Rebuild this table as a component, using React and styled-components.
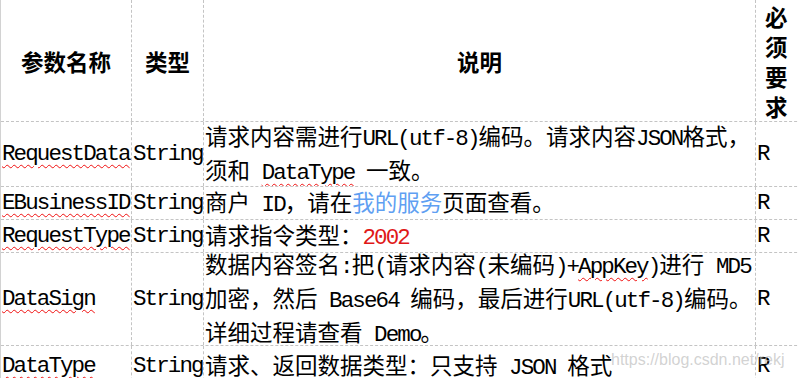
import React from 'react';
import styled, { createGlobalStyle, css } from 'styled-components';

const GlobalStyle = createGlobalStyle`
  html, body {
    margin: 0;
    padding: 0;
    background: #fff;
  }
  body {
    width: 798px;
    height: 378px;
    overflow: hidden;
    font-family: "Noto Sans CJK SC", sans-serif;
  }
`;

const COLS = '131px 72px 552px 80px';
const GRID = '#c4c4c4';

const Sheet = styled.div`
  position: relative;
  width: 836px;
  border-left: 1px solid #d2d2d2;
  color: #000;
  font-family: "Noto Sans CJK SC", sans-serif;
  font-size: 22.5px;
  line-height: 30px;
`;

const Row = styled.div`
  display: grid;
  grid-template-columns: ${COLS};
  box-sizing: border-box;
  height: ${(p) => p.$h}px;
  border-bottom: ${(p) => (p.$last ? 'none' : `1px dashed ${GRID}`)};
`;

const Cell = styled.div`
  display: flex;
  align-items: center;
  justify-content: ${(p) => (p.$center ? 'center' : 'flex-start')};
  padding: 0 ${(p) => p.$pad || 1}px;
  border-right: 1px dashed ${GRID};
  white-space: nowrap;
  overflow: hidden;
  font-weight: ${(p) => (p.$head ? 700 : 400)};
`;

const Stack = styled.span`
  display: block;
  width: 1em;
  white-space: normal;
  line-height: 30px;
`;

const Lines = styled.div`
  line-height: 30px;
`;

const Latin = styled.span`
  font-family: "Liberation Mono", monospace;
  font-size: 22.5px;
  letter-spacing: -1.9px;
  ${(p) =>
    p.$wavy &&
    css`
      text-decoration-line: underline;
      text-decoration-style: wavy;
      text-decoration-color: #f01010;
      text-decoration-thickness: 1px;
      text-underline-offset: 4px;
    `}
`;

const Link = styled.span`
  color: #5f9ff2;
`;

const Code = styled(Latin)`
  color: #e01818;
`;

const Watermark = styled.div`
  position: absolute;
  left: 610px;
  top: 348px;
  font-family: "Liberation Sans", sans-serif;
  font-size: 16px;
  line-height: 24px;
  color: rgba(185, 185, 185, 0.65);
  pointer-events: none;
`;

const Name = ({ children }) => (
  <Cell>
    <Latin $wavy>{children}</Latin>
  </Cell>
);

const Type = () => (
  <Cell>
    <Latin>String</Latin>
  </Cell>
);

const Req = () => (
  <Cell>
    <Latin>R</Latin>
  </Cell>
);

export default function App() {
  return (
    <>
      <GlobalStyle />
      <Sheet>
        <Row $h={122}>
          <Cell $head $center>参数名称</Cell>
          <Cell $head $center>类型</Cell>
          <Cell $head $center>说明</Cell>
          <Cell $head $pad={9}>
            <Stack>必须要求</Stack>
          </Cell>
        </Row>

        <Row $h={65}>
          <Name>RequestData</Name>
          <Type />
          <Cell>
            <Lines>
              请求内容需进行<Latin>URL(utf-8)</Latin>编码。请求内容<Latin>JSON</Latin>格式，
              <br />
              须和<Latin> </Latin>
              <Latin $wavy>DataType</Latin>
              <Latin> </Latin>一致。
            </Lines>
          </Cell>
          <Req />
        </Row>

        <Row $h={33}>
          <Name>EBusinessID</Name>
          <Type />
          <Cell>
            <Lines>
              商户<Latin> ID</Latin>，请在<Link>我的服务</Link>页面查看。
            </Lines>
          </Cell>
          <Req />
        </Row>

        <Row $h={33}>
          <Name>RequestType</Name>
          <Type />
          <Cell>
            <Lines>
              请求指令类型：<Code>2002</Code>
            </Lines>
          </Cell>
          <Req />
        </Row>

        <Row $h={93}>
          <Name>DataSign</Name>
          <Type />
          <Cell>
            <Lines>
              数据内容签名<Latin>:</Latin>把<Latin>(</Latin>请求内容<Latin>(</Latin>未编码
              <Latin>)+</Latin>
              <Latin $wavy>AppKey</Latin>
              <Latin>)</Latin>进行<Latin> MD5</Latin>
              <br />
              加密，然后<Latin> Base64 </Latin>编码，最后进行<Latin>URL(utf-8)</Latin>编码。
              <br />
              详细过程请查看<Latin> Demo</Latin>。
            </Lines>
          </Cell>
          <Req />
        </Row>

        <Row $h={40} $last>
          <Name>DataType</Name>
          <Type />
          <Cell>
            <Lines>
              请求、返回数据类型：只支持<Latin> JSON </Latin>格式
            </Lines>
          </Cell>
          <Req />
        </Row>

        <Watermark>https://blog.csdn.net/rekj</Watermark>
      </Sheet>
    </>
  );
}
